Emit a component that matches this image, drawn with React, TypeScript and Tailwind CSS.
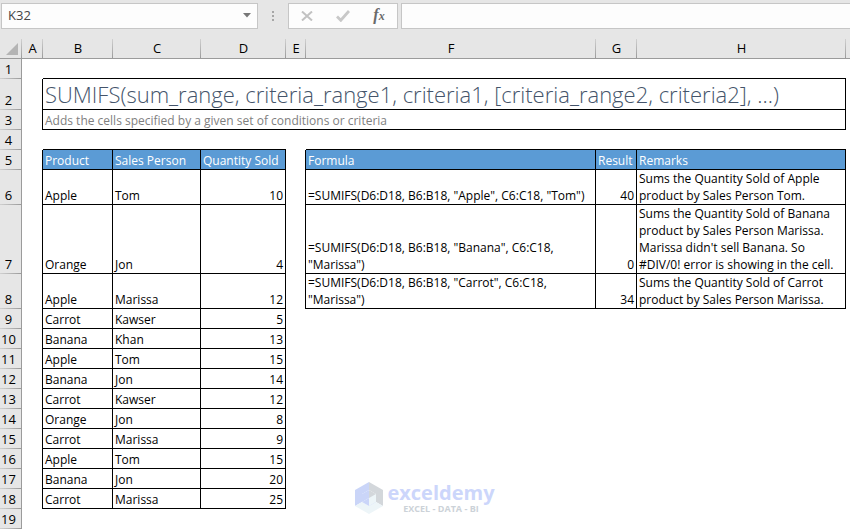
import { useState } from "react";
import clsx from "clsx";

const columns = ["A", "B", "C", "D", "E", "F", "G", "H"];

const sales = [
    { row: 6, product: "Apple", person: "Tom", quantity: 10 },
    { row: 7, product: "Orange", person: "Jon", quantity: 4 },
    { row: 8, product: "Apple", person: "Marissa", quantity: 12 },
    { row: 9, product: "Carrot", person: "Kawser", quantity: 5 },
    { row: 10, product: "Banana", person: "Khan", quantity: 13 },
    { row: 11, product: "Apple", person: "Tom", quantity: 15 },
    { row: 12, product: "Banana", person: "Jon", quantity: 14 },
    { row: 13, product: "Carrot", person: "Kawser", quantity: 12 },
    { row: 14, product: "Orange", person: "Jon", quantity: 8 },
    { row: 15, product: "Carrot", person: "Marissa", quantity: 9 },
    { row: 16, product: "Apple", person: "Tom", quantity: 15 },
    { row: 17, product: "Banana", person: "Jon", quantity: 20 },
    { row: 18, product: "Carrot", person: "Marissa", quantity: 25 },
];

const formulas = [
    {
        formula: '=SUMIFS(D6:D18, B6:B18, "Apple", C6:C18, "Tom")',
        result: 40,
        remarks: "Sums the Quantity Sold of Apple product by Sales Person Tom.",
    },
    {
        formula: '=SUMIFS(D6:D18, B6:B18, "Banana", C6:C18, "Marissa")',
        result: 0,
        remarks: "Sums the Quantity Sold of Banana product by Sales Person Marissa. Marissa didn't sell Banana. So #DIV/0! error is showing in the cell.",
    },
    {
        formula: '=SUMIFS(D6:D18, B6:B18, "Carrot", C6:C18, "Marissa")',
        result: 34,
        remarks: "Sums the Quantity Sold of Carrot product by Sales Person Marissa.",
    },
];

// Every cell draws its right and bottom edge, so a box starts on its neighbours' edges
const right = "border-r border-r-black";
const bottom = "border-b border-b-black";
const boxed = "border-r border-b border-black px-[2px]";
const header = "border-r border-b border-black bg-[#5b9bd5] px-[2px] text-left font-normal text-white";

function RowHeader({ n }: { n: number }) {
    return (
        <th
            scope="row"
            className="border-r border-[#9b9b9b] bg-[#e6e6e6] bg-[linear-gradient(to_right,#d0d0d0,#9b9b9b)] bg-[length:100%_1px] bg-bottom bg-no-repeat pr-1 pb-px text-center text-[13px] font-normal"
        >
            {n}
        </th>
    );
}

function FormulaBar() {
    const [name, setName] = useState("K32");
    const [value, setValue] = useState("");

    return (
        <div className="flex items-stretch pt-[3px] pl-px">
            <div className="flex h-[26px] w-[257px] shrink-0 border border-[#c6c6c6] bg-[#fdfdfd]">
                <input
                    aria-label="Name box"
                    value={name}
                    onChange={(e) => setName(e.target.value)}
                    className="min-w-0 flex-1 bg-transparent px-1.5 text-[13px] text-[#444] outline-none"
                />
                <button type="button" aria-label="Show names" className="flex w-5 items-center justify-center pb-[2px]">
                    <svg width="8" height="5" viewBox="0 0 8 5" fill="#777">
                        <path d="M0 0h8L4 4.5z" />
                    </svg>
                </button>
            </div>
            <div className="flex w-[30px] shrink-0 items-center justify-center">
                <svg width="2" height="10" viewBox="0 0 2 10" fill="#a6a6a6">
                    <path d="M0 0h2v2H0zM0 4h2v2H0zM0 8h2v2H0z" />
                </svg>
            </div>
            <div className="flex w-[110px] shrink-0 border border-[#c6c6c6] bg-[#fdfdfd]">
                <button type="button" aria-label="Cancel" className="flex flex-1 items-center justify-center" onClick={() => setValue("")}>
                    <svg width="12" height="10" viewBox="0 0 12 10" fill="none" stroke="#c2c2c2" strokeWidth="2">
                        <path d="M1 .5l10 9M11 .5l-10 9" />
                    </svg>
                </button>
                <button type="button" aria-label="Enter" className="flex flex-1 items-center justify-center">
                    <svg width="14" height="12" viewBox="0 0 14 12" fill="none" stroke="#c8c8c8" strokeWidth="2.8">
                        <path d="M1 6.5l3.8 3.8L13 1" />
                    </svg>
                </button>
                <button
                    type="button"
                    aria-label="Insert function"
                    className="flex flex-1 items-baseline justify-center pt-[3px] font-['Liberation_Serif',serif] text-base leading-4 font-bold text-[#6a6a6a] italic"
                >
                    f<span className="text-xs">x</span>
                </button>
            </div>
            <input
                aria-label="Formula bar"
                value={value}
                onChange={(e) => setValue(e.target.value)}
                className="ml-[3px] min-w-0 flex-1 border border-r-0 border-[#c6c6c6] bg-[#fdfdfd] px-1.5 text-[13px] outline-none"
            />
        </div>
    );
}

function Watermark() {
    return (
        <div className="pointer-events-none absolute inset-x-0 bottom-[15px] flex items-center justify-center gap-1">
            <svg width="28" height="32" viewBox="0 0 28 32">
                <path d="M14 0L0 8v16l7-4v-8l7-4z" fill="#cad5f8" />
                <path d="M14 0l14 8v16l-7-4v-8l-7-4z" fill="#d3d7db" />
                <path d="M0 24l7-4 7 4 7-4 7 4-14 8z" fill="#edf5f8" />
                <path d="M7 12l7-4v8l-7 4z" fill="#cad5f8" />
                <path d="M14 8l7 4v8l-7-4z" fill="#d3d7db" />
                <path d="M7 20l7-4 7 4-7 4z" fill="#cad5f8" />
                <path d="M14 16l7-4v8l-7 4z" fill="#edf5f8" />
            </svg>
            <div className="text-center font-bold">
                <p className="text-xl leading-[22px] text-[#ccd6fb]">exceldemy</p>
                <p className="text-[9px] leading-[10px] text-[#ccd2d8]">EXCEL - DATA - BI</p>
            </div>
        </div>
    );
}

export default function App() {
    return (
        <div className="flex min-h-screen flex-col bg-[#e6e6e6] font-['Open_Sans',sans-serif] text-black">
            <FormulaBar />
            <main className="relative flex-1 pt-[10px]">
                <table className="w-full table-fixed border-separate border-spacing-0 bg-white text-xs leading-[17px]">
                    <colgroup>
                        <col className="w-[22px]" />
                        <col className="w-[21px]" />
                        <col className="w-[70px]" />
                        <col className="w-[88px]" />
                        <col className="w-[85px]" />
                        <col className="w-5" />
                        <col className="w-[290px]" />
                        <col className="w-[41px]" />
                        <col className="w-[209px]" />
                        <col />
                    </colgroup>
                    <thead className="bg-[#e6e6e6]">
                        <tr className="h-5">
                            <td className="border-b border-[#9b9b9b] bg-[linear-gradient(to_bottom,#d0d0d0,#9b9b9b)] bg-[length:1px_100%] bg-right bg-no-repeat">
                                <svg width="12" height="12" viewBox="0 0 12 12" fill="#b4b4b4" className="ml-1.5">
                                    <path d="M12 0v12H0z" />
                                </svg>
                            </td>
                            {columns.map((letter) => (
                                <th
                                    key={letter}
                                    scope="col"
                                    className="border-b border-[#9b9b9b] bg-[linear-gradient(to_bottom,#d0d0d0,#9b9b9b)] bg-[length:1px_100%] bg-right bg-no-repeat text-[13px] font-normal"
                                >
                                    {letter}
                                </th>
                            ))}
                            <td className="border-b border-[#9b9b9b]" />
                        </tr>
                    </thead>
                    <tbody className="align-bottom">
                        <tr className="h-5">
                            <RowHeader n={1} />
                            <td />
                            <td colSpan={7} className={bottom} />
                            <td />
                        </tr>
                        <tr className="h-[31px]">
                            <RowHeader n={2} />
                            <td className={right} />
                            <td colSpan={7} className={clsx(boxed, "text-[22px] leading-[30px] font-light whitespace-nowrap text-[#44546a]")}>
                                SUMIFS(sum_range, criteria_range1, criteria1, [criteria_range2, criteria2], ...)
                            </td>
                            <td />
                        </tr>
                        <tr className="h-5">
                            <RowHeader n={3} />
                            <td className={right} />
                            <td colSpan={7} className={clsx(boxed, "text-[#7f7f7f]")}>
                                Adds the cells specified by a given set of conditions or criteria
                            </td>
                            <td />
                        </tr>
                        <tr className="h-5">
                            <RowHeader n={4} />
                            <td />
                            <td colSpan={3} className={bottom} />
                            <td />
                            <td colSpan={3} className={bottom} />
                            <td />
                        </tr>
                        <tr className="h-5">
                            <RowHeader n={5} />
                            <td className={right} />
                            <th scope="col" className={header}>Product</th>
                            <th scope="col" className={header}>Sales Person</th>
                            <th scope="col" className={header}>Quantity Sold</th>
                            <td className={right} />
                            <th scope="col" className={header}>Formula</th>
                            <th scope="col" className={header}>Result</th>
                            <th scope="col" className={header}>Remarks</th>
                            <td />
                        </tr>
                        {sales.map((sale, i) => {
                            const entry = formulas[i];
                            return (
                                <tr key={sale.row} className="h-5">
                                    <RowHeader n={sale.row} />
                                    <td className={right} />
                                    <td className={boxed}>{sale.product}</td>
                                    <td className={boxed}>{sale.person}</td>
                                    <td className={clsx(boxed, "text-right")}>{sale.quantity}</td>
                                    {entry ? (
                                        <>
                                            <td className={right} />
                                            <td className={boxed}>{entry.formula}</td>
                                            <td className={clsx(boxed, "text-right")}>{entry.result}</td>
                                            <td className={boxed}>{entry.remarks}</td>
                                            <td />
                                        </>
                                    ) : (
                                        <td colSpan={5} />
                                    )}
                                </tr>
                            );
                        })}
                        <tr className="h-5">
                            <RowHeader n={19} />
                            <td colSpan={9} />
                        </tr>
                    </tbody>
                </table>
                <Watermark />
            </main>
        </div>
    );
}
